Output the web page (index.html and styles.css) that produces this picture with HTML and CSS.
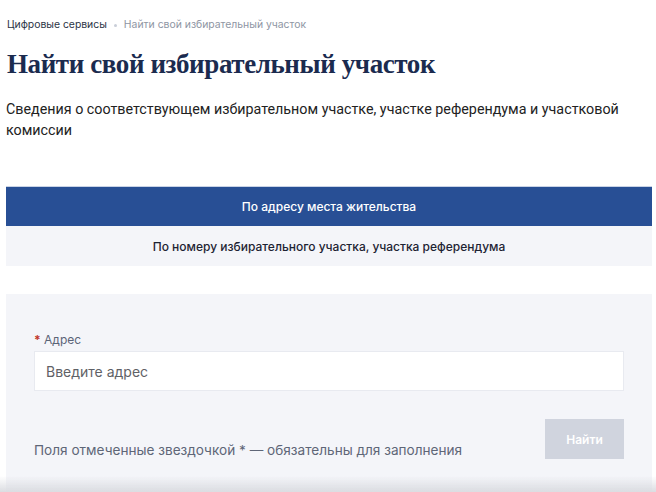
FILE: index.html
```html
<!DOCTYPE html>
<html lang="ru">
<head>
    <meta charset="UTF-8">
    <meta name="viewport" content="width=device-width, initial-scale=1.0">
    <title>Найти свой избирательный участок</title>
    <link rel="stylesheet" href="styles.css">
</head>
<body>
    <div class="page">
        <nav class="breadcrumbs">
            <a href="#" class="crumb">Цифровые сервисы</a>
            <span class="crumb-dot"></span>
            <span class="crumb current">Найти свой избирательный участок</span>
        </nav>

        <h1 class="title">Найти свой избирательный участок</h1>
        <p class="lead">Сведения о соответствующем избирательном участке, участке референдума и участковой комиссии</p>

        <div class="tabs">
            <button class="tab active">По адресу места жительства</button>
            <button class="tab">По номеру избирательного участка, участка референдума</button>
        </div>

        <form class="search-form">
            <label class="field-label" for="address"><span class="req">*</span> Адрес</label>
            <input class="field-input" id="address" type="text" placeholder="Введите адрес">

            <div class="form-footer">
                <p class="hint">Поля отмеченные звездочкой * — обязательны для заполнения</p>
                <button type="submit" class="submit-btn" disabled>Найти</button>
            </div>
        </form>
    </div>

    <div class="bottom-fade"></div>
</body>
</html>
```

FILE: styles.css
```css
* {
    margin: 0;
    padding: 0;
    box-sizing: border-box;
    font-family: 'Inter', 'Noto Sans', sans-serif;
}

body {
    background: #fff;
    color: #1d1d1f;
}

.page {
    padding: 0 4px 0 6px;
}

/* Breadcrumbs */
.breadcrumbs {
    display: flex;
    align-items: center;
    gap: 7px;
    padding-top: 18px;
    padding-left: 1px;
    font-size: 10.4px;
    line-height: 14px;
}

.crumb {
    color: #2b3445;
    text-decoration: none;
}

.crumb.current {
    color: #8e95a3;
}

.crumb-dot {
    width: 3px;
    height: 3px;
    border-radius: 50%;
    background: #c9ced8;
}

.title {
    margin-top: 15px;
    font-family: 'Liberation Serif', 'DejaVu Serif', serif;
    font-size: 27px;
    letter-spacing: -0.4px;
    line-height: 34px;
    font-weight: bold;
    color: #1b2b4f;
    padding-left: 1px;
}

.lead {
    margin-top: 18px;
    font-family: 'Roboto', 'Inter', sans-serif;
    font-size: 14.3px;
    line-height: 21px;
    color: #222;
    padding-right: 20px;
}

/* Tabs */
.tabs {
    margin-top: 45px;
    display: flex;
    flex-direction: column;
}

.tab {
    height: 40px;
    border: none;
    background: #f4f5f9;
    font-size: 12px;
    font-weight: 500;
    color: #1d2333;
    cursor: pointer;
}

.tab.active {
    background: #284f95;
    color: #fff;
    border-top: 1px solid #c9d3e6;
}

/* Form */
.search-form {
    margin-top: 28px;
    background: #f4f5f9;
    padding: 38px 28px 32px 28px;
}

.field-label {
    display: block;
    font-size: 12px;
    line-height: 16px;
    color: #5b6477;
    margin-bottom: 3px;
}

.req {
    color: #c0352b;
    font-weight: bold;
}

.field-input {
    width: 100%;
    height: 40px;
    border: 1px solid #e8eaf0;
    background: #fff;
    padding: 0 11px;
    font-size: 14px;
    color: #222;
    outline: none;
}

.field-input::placeholder {
    color: #5f6166;
}

.form-footer {
    margin-top: 28px;
    display: flex;
    justify-content: space-between;
    align-items: flex-end;
}

.hint {
    font-size: 13.6px;
    line-height: 18px;
    color: #5e6677;
}

.submit-btn {
    width: 79px;
    height: 40px;
    border: none;
    background: #d0d4de;
    color: #fff;
    font-size: 12px;
    font-weight: 600;
}

.bottom-fade {
    position: fixed;
    left: 0;
    right: 0;
    bottom: 0;
    height: 16px;
    background: linear-gradient(to bottom, rgba(220, 222, 228, 0), rgba(215, 217, 222, 0.9));
    pointer-events: none;
}
```
